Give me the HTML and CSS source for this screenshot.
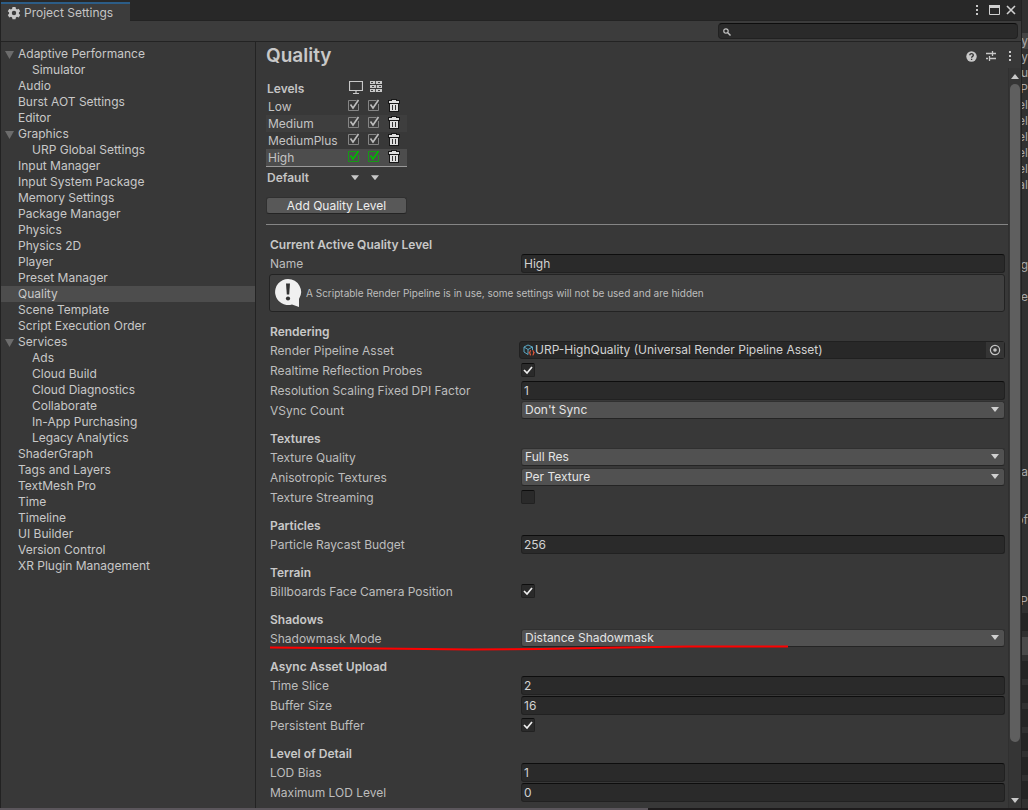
FILE: index.html
```
<!DOCTYPE html>
<html lang="en">
<head>
<meta charset="utf-8">
<title>Project Settings</title>
<link rel="stylesheet" href="styles.css">
</head>
<body>
<svg class="defs" aria-hidden="true">
  <symbol id="trash" viewBox="0 0 12 13"><path d="M3 0h6v1h3v4h-1v8H1V5H0V1h3z" fill="#161616"/><path d="M4 1h4v1h3v2H1V2h3z" fill="#ddd"/><path d="M2 5h8v7H2z" fill="#ddd"/><path d="M4.500 6v5M7.500 6v5" stroke="#333"/></symbol>
  <symbol id="dots" viewBox="0 0 4 12"><path d="M1 1h2v2H1zM1 5h2v2H1zM1 9h2v2H1z" fill="#c8c8c8"/></symbol>
</svg>
<div class="desktop">
<main class="window">
  <header class="tabbar">
    <div class="tab">
      <svg width="14" height="14" viewBox="0 0 14 14"><path fill="#c8c8c8" fill-rule="evenodd" d="M5.500 1h3l.4 1.700 1.100.7 1.700-.6 1.500 2.500-1.300 1.200v1.200l1.300 1.200-1.500 2.500-1.700-.6-1.100.7-.4 1.700h-3l-.4-1.700-1.100-.7-1.700.6L.8 8.900l1.300-1.200V6.500L.8 5.300l1.500-2.500 1.700.6 1.100-.7zM7 4.800a2.200 2.200 0 1 0 0 4.400 2.200 2.200 0 0 0 0-4.400z"/></svg>
      <span>Project Settings</span>
    </div>
    <div class="winbuttons">
      <button aria-label="Menu"><svg width="4" height="12"><use href="#dots"/></svg></button>
      <button aria-label="Maximize"><svg width="11" height="11" viewBox="0 0 11 11"><path d="M.5 .5h10v9H.5z" fill="none" stroke="#d0d0d0"/><path d="M0 0h11v3H0z" fill="#d0d0d0"/></svg></button>
      <button aria-label="Close"><svg width="10" height="10" viewBox="0 0 10 10"><path d="M1 1l8 8M9 1L1 9" stroke="#d0d0d0" stroke-width="1.600"/></svg></button>
    </div>
  </header>
  <div class="toolbar"><input class="search" type="search" aria-label="Search settings"></div>
  <div class="panes">
    <nav class="tree">
      <a class="open" href="#">Adaptive Performance</a>
      <a class="child" href="#">Simulator</a>
      <a href="#">Audio</a>
      <a href="#">Burst AOT Settings</a>
      <a href="#">Editor</a>
      <a class="open" href="#">Graphics</a>
      <a class="child" href="#">URP Global Settings</a>
      <a href="#">Input Manager</a>
      <a href="#">Input System Package</a>
      <a href="#">Memory Settings</a>
      <a href="#">Package Manager</a>
      <a href="#">Physics</a>
      <a href="#">Physics 2D</a>
      <a href="#">Player</a>
      <a href="#">Preset Manager</a>
      <a class="selected" href="#" aria-current="page">Quality</a>
      <a href="#">Scene Template</a>
      <a href="#">Script Execution Order</a>
      <a class="open" href="#">Services</a>
      <a class="child" href="#">Ads</a>
      <a class="child" href="#">Cloud Build</a>
      <a class="child" href="#">Cloud Diagnostics</a>
      <a class="child" href="#">Collaborate</a>
      <a class="child" href="#">In-App Purchasing</a>
      <a class="child" href="#">Legacy Analytics</a>
      <a href="#">ShaderGraph</a>
      <a href="#">Tags and Layers</a>
      <a href="#">TextMesh Pro</a>
      <a href="#">Time</a>
      <a href="#">Timeline</a>
      <a href="#">UI Builder</a>
      <a href="#">Version Control</a>
      <a href="#">XR Plugin Management</a>
    </nav>
    <section class="detail">
      <div class="titlebar">
        <h1>Quality</h1>
        <div class="tools">
          <button aria-label="Help"><svg width="11" height="11" viewBox="0 0 11 11"><circle cx="5.500" cy="5.500" r="5.200" fill="#c8c8c8"/><path d="M3.800 4.300c0-2.300 3.500-2.200 3.500-.1 0 1.200-1.700 1.200-1.700 2.500M5.600 7.700v1.200" fill="none" stroke="#333" stroke-width="1.300"/></svg></button>
          <button aria-label="Presets"><svg width="12" height="12" viewBox="0 0 12 12"><path d="M1 3.500h6M8 3.500h3M7.500 1v5M1 8.500h2M5 8.500h6M4.500 6v5" fill="none" stroke="#c8c8c8" stroke-width="1.300"/></svg></button>
          <button aria-label="More"><svg width="4" height="12"><use href="#dots"/></svg></button>
        </div>
      </div>
      <div class="viewport">
        <div class="content">
          <table class="levels">
            <thead><tr><th>Levels</th>
              <th class="platform"><svg width="14" height="13" viewBox="0 0 14 13"><path d="M.5 .5h13v9H.5zM7 10v2M4 12.500h6" fill="none" stroke="#c8c8c8" stroke-width="1.200"/></svg></th>
              <th class="platform"><svg width="14" height="13" viewBox="0 0 14 13"><path d="M1 0h12v3H1zM1 4h12v3H1zM1 8h12v3H1z" fill="#c8c8c8"/><path d="M2 1.500h2M9 1.500h2M3 5.500h2M10 5.500h2M2 9.500h2M9 9.500h2" stroke="#444"/><path d="M6.500 0v3M7.500 4v3M6.500 8v3" stroke="#555"/></svg></th><th></th></tr></thead>
            <tbody>
              <tr><td>Low</td><td><input type="checkbox" checked aria-label="Low desktop"></td><td><input type="checkbox" checked aria-label="Low server"></td><td><button aria-label="Delete Low"><svg width="12" height="13"><use href="#trash"/></svg></button></td></tr>
              <tr class="alt"><td>Medium</td><td><input type="checkbox" checked aria-label="Medium desktop"></td><td><input type="checkbox" checked aria-label="Medium server"></td><td><button aria-label="Delete Medium"><svg width="12" height="13"><use href="#trash"/></svg></button></td></tr>
              <tr><td>MediumPlus</td><td><input type="checkbox" checked aria-label="MediumPlus desktop"></td><td><input type="checkbox" checked aria-label="MediumPlus server"></td><td><button aria-label="Delete MediumPlus"><svg width="12" height="13"><use href="#trash"/></svg></button></td></tr>
              <tr class="current"><td>High</td><td><input type="checkbox" checked aria-label="High desktop"></td><td><input type="checkbox" checked aria-label="High server"></td><td><button aria-label="Delete High"><svg width="12" height="13"><use href="#trash"/></svg></button></td></tr>
            </tbody>
            <tfoot><tr><th>Default</th><td><button class="drop" aria-label="Desktop default"></button></td><td><button class="drop" aria-label="Server default"></button></td><td></td></tr></tfoot>
          </table>
          <button class="add">Add Quality Level</button>
          <hr>
          <form class="form">
            <section>
              <h2>Current Active Quality Level</h2>
              <div class="row"><label for="name">Name</label><input class="text" id="name" value="High"></div>
              <div class="help">
                <svg width="28" height="30" viewBox="0 0 28 30"><path d="M14 1a13 13 0 1 0 4 25.400l7 2.600v-8A13 13 0 0 0 14 1z" fill="#f0f0f0"/><path d="M12 5.500h4l-.8 11h-2.400z" fill="#333"/><circle cx="14" cy="20.500" r="2.100" fill="#333"/></svg>
                <span>A Scriptable Render Pipeline is in use, some settings will not be used and are hidden</span>
              </div>
            </section>
            <section>
              <h2>Rendering</h2>
              <div class="row"><label for="asset">Render Pipeline Asset</label>
                <div class="object">
                  <svg width="12" height="12" viewBox="0 0 12 12"><path d="M5 1l4.500 2v3M5 1L1 3v5l4 2.500M1 3l4 2.500L9.500 3M5 5.500v5" fill="none" stroke="#5aa7c4" stroke-width="1"/><path d="M8 6.500c-1.500 0-.5 1.800-1.500 2.200 1 .4 0 2.300 1.500 2.300M9.500 6.500c1.500 0 .5 1.800 1.500 2.200-1 .4 0 2.300-1.500 2.300" fill="none" stroke="#e0583a" stroke-width="1.200"/></svg>
                  <input id="asset" value="URP-HighQuality (Universal Render Pipeline Asset)" readonly>
                  <button type="button" aria-label="Pick asset"><svg width="12" height="12" viewBox="0 0 12 12"><circle cx="6" cy="6" r="4.600" fill="none" stroke="#c4c4c4" stroke-width="1.200"/><circle cx="6" cy="6" r="1.800" fill="#c4c4c4"/></svg></button>
                </div></div>
              <div class="row"><label for="probes">Realtime Reflection Probes</label><input class="check" type="checkbox" id="probes" checked></div>
              <div class="row"><label for="dpi">Resolution Scaling Fixed DPI Factor</label><input class="text" id="dpi" value="1"></div>
              <div class="row"><label for="vsync">VSync Count</label><select id="vsync"><option>Don't Sync</option></select></div>
            </section>
            <section>
              <h2>Textures</h2>
              <div class="row"><label for="texq">Texture Quality</label><select id="texq"><option>Full Res</option></select></div>
              <div class="row"><label for="aniso">Anisotropic Textures</label><select id="aniso"><option>Per Texture</option></select></div>
              <div class="row"><label for="stream">Texture Streaming</label><input class="check" type="checkbox" id="stream"></div>
            </section>
            <section>
              <h2>Particles</h2>
              <div class="row"><label for="ray">Particle Raycast Budget</label><input class="text" id="ray" value="256"></div>
            </section>
            <section>
              <h2>Terrain</h2>
              <div class="row"><label for="bill">Billboards Face Camera Position</label><input class="check" type="checkbox" id="bill" checked></div>
            </section>
            <section class="marked">
              <h2>Shadows</h2>
              <div class="row"><label for="mask">Shadowmask Mode</label><select id="mask"><option>Distance Shadowmask</option></select></div>
              <svg class="stroke" width="518" height="6" viewBox="0 0 518 6"><path d="M0 2.500L110 3.500 200 4.500 270 4 350 2.500 420 1.500 518 1.500" fill="none" stroke="#f00" stroke-width="2"/></svg>
            </section>
            <section>
              <h2>Async Asset Upload</h2>
              <div class="row"><label for="slice">Time Slice</label><input class="text" id="slice" value="2"></div>
              <div class="row"><label for="buf">Buffer Size</label><input class="text" id="buf" value="16"></div>
              <div class="row"><label for="persist">Persistent Buffer</label><input class="check" type="checkbox" id="persist" checked></div>
            </section>
            <section>
              <h2>Level of Detail</h2>
              <div class="row"><label for="bias">LOD Bias</label><input class="text" id="bias" value="1"></div>
              <div class="row"><label for="maxlod">Maximum LOD Level</label><input class="text" id="maxlod" value="0"></div>
            </section>
          </form>
        </div>
        <div class="scrollbar">
          <button aria-label="Scroll up"><svg width="8" height="5"><path d="M0 5l4-5 4 5z" fill="#c8c8c8"/></svg></button>
          <div class="track"><div class="thumb"></div></div>
          <button aria-label="Scroll down"><svg width="8" height="5"><path d="M0 0l4 5 4-5z" fill="#c8c8c8"/></svg></button>
        </div>
      </div>
    </section>
  </div>
</main>
<aside class="behind">
  <div class="names top"><span class="lit">ty</span><span>ty</span><span>u</span><span>eP</span><span>el</span><span>el</span><span>el</span><span>el</span><span>el</span><span>al</span></div>
  <div class="names mid"><span>ng</span><span></span><span>ne</span></div>
  <div class="names low"><span>a</span><span></span><span></span><span>of</span></div>
  <div class="names last"><span>RP</span></div>
  <div class="slots"><i></i><i class="button"></i><i></i><i></i><i></i><i></i><i></i><i></i></div>
</aside>
</div>
<div class="bottom"></div>
</body>
</html>
```
FILE: styles.css
```
* { box-sizing: border-box; }
body {
  margin: 0; height: 100vh; overflow: hidden;
  display: flex; flex-direction: column;
  background: #222; color: #c4c4c4;
  font: 12px/16px Inter, "Liberation Sans", sans-serif;
}
button, input, select { font: inherit; color: inherit; margin: 0; }
button { background: none; border: 0; padding: 0; display: flex; align-items: center; justify-content: center; }
svg { display: block; flex: none; }
.defs { position: absolute; width: 0; height: 0; }

.desktop { flex: 1; min-height: 0; display: flex; padding-left: 1px; }
.bottom { flex: none; height: 2px; background: linear-gradient(90deg, #5b565c 0 63%, #1d1b1c 63%); }
.window { flex: 1; min-width: 0; display: flex; flex-direction: column; background: #383838; }

.tabbar { flex: none; height: 21px; display: flex; justify-content: space-between; background: #282828; border-bottom: 1px solid #232323; }
.tab {
  display: flex; align-items: center; gap: 3px; height: 19px; margin-top: 2px; padding: 0 17px 0 6px;
  background: #3c3c3c; border-top: 2px solid #2c5d87;
}
.winbuttons { display: flex; align-items: center; gap: 6px; padding-right: 5px; }
.winbuttons button:first-child { margin-right: 4px; }
.toolbar { flex: none; height: 21px; padding: 2px 3px 0 0; display: flex; justify-content: flex-end; align-items: flex-start; background: #3c3c3c; border-bottom: 1px solid #232323; }
.search {
  appearance: none; width: 300px; height: 16px; padding: 0 8px 0 20px;
  background: #2a2a2a url("data:image/svg+xml,%3Csvg xmlns='http://www.w3.org/2000/svg' width='8' height='8'%3E%3Ccircle cx='3' cy='3' r='2.200' fill='none' stroke='%23c4c4c4' stroke-width='1.200'/%3E%3Cpath d='M4.500 4.500L7.500 7.500' stroke='%23c4c4c4' stroke-width='1.400'/%3E%3C/svg%3E") no-repeat 4px 4px;
  border: 1px solid #212121; border-top-color: #0d0d0d; border-radius: 4px;
}

.panes { flex: 1; min-height: 0; display: flex; }
.tree { flex: none; width: 255px; padding-top: 4px; border-right: 1px solid #232323; }
.tree a { display: block; height: 16px; padding-left: 17px; color: #c8c8c8; text-decoration: none; }
.tree .child { padding-left: 31px; }
.tree .selected { background: #4d4d4d; }
.tree .open { display: flex; align-items: center; gap: 4px; padding-left: 4px; }
.tree .open::before { content: ""; width: 9px; height: 8px; margin-top: 2px; background: #6c6c6c; clip-path: polygon(0 0, 100% 0, 50% 100%); }

.detail { flex: 1; min-width: 0; display: flex; flex-direction: column; }
.titlebar { flex: none; height: 26px; padding: 2px 9px 0 10px; display: flex; justify-content: space-between; align-items: center; }
h1 { margin: 0; font-size: 19px; line-height: 24px; font-weight: 600; color: #c8c8c8; }
.tools { display: flex; align-items: center; gap: 8px; }
.tools button:last-child { margin-left: 3px; }
.viewport { flex: 1; min-height: 0; display: flex; }
.content { flex: 1; min-width: 0; overflow: hidden; padding: 12px 0 0 10px; }

.levels { width: 141px; table-layout: fixed; border-collapse: collapse; line-height: 17px; }
.levels th, .levels td { height: 17px; padding: 0; vertical-align: top; }
.levels th { font-weight: 600; text-align: left; padding-left: 1px; }
.levels th:first-child { width: 82px; }
.levels th.platform { width: 20px; }
.levels thead th { height: 18px; }
.levels thead svg { margin-top: 1px; }
.levels td:first-child { padding-left: 2px; }
.levels .alt { background: #3e3e3e; }
.levels .current { background: #4d4d4d; border-bottom: 1px solid #999; }
.levels tfoot th, .levels tfoot td { height: 22px; vertical-align: middle; }
.levels input {
  appearance: none; display: block; width: 12px; height: 12px; margin-top: 1px;
  background: url("data:image/svg+xml,%3Csvg xmlns='http://www.w3.org/2000/svg' width='12' height='12'%3E%3Cpath d='M8.500 1.500h-8v10h10V5' fill='none' stroke='%23858585'/%3E%3Cpath d='M2.500 5.500L5 9l5.500-8' fill='none' stroke='%23bdbdbd' stroke-width='1.600'/%3E%3C/svg%3E");
}
.levels tbody button { margin-top: 1px; }
.levels .current input { background-image: url("data:image/svg+xml,%3Csvg xmlns='http://www.w3.org/2000/svg' width='12' height='12'%3E%3Cpath d='M8.500 1.500h-8v10h10V5' fill='none' stroke='%23159a15'/%3E%3Cpath d='M2.500 5.500L5 9l5.500-8' fill='none' stroke='%2300b800' stroke-width='1.700'/%3E%3C/svg%3E"); }
.drop { width: 8px; height: 5px; margin-left: 3px; background: #c8c8c8; clip-path: polygon(0 0, 100% 0, 50% 100%); }
.add { width: 141px; height: 17px; margin-top: 8px; background: #585858; border: 1px solid #303030; border-bottom-color: #242424; border-radius: 3px; color: #eee; line-height: 15px; }
hr { margin: 10px 0 11px; border: 0; height: 1px; background: #858585; }

.form { padding: 0 3px 0 4px; }
.form section { margin-bottom: 9px; }
h2 { margin: 0; font-size: 12px; line-height: 18px; font-weight: 600; color: #c8c8c8; }
.row { display: flex; height: 20px; }
.row label { flex: none; width: 251px; line-height: 20px; white-space: nowrap; color: #bdbdbd; }
.text { flex: 1; min-width: 0; height: 19px; padding: 1px 2px 0; background: #2a2a2a; border: 1px solid #212121; border-top-color: #0d0d0d; border-radius: 3px; color: #d2d2d2; }
select {
  appearance: none; flex: 1; min-width: 0; height: 18px; padding: 0 20px 0 3px; line-height: 16px; color: #e4e4e4;
  background: #515151 url("data:image/svg+xml,%3Csvg xmlns='http://www.w3.org/2000/svg' width='8' height='5'%3E%3Cpath d='M0 0h8L4 5z' fill='%23d0d0d0'/%3E%3C/svg%3E") no-repeat right 5px center;
  border: 1px solid #303030; border-bottom-color: #242424; border-radius: 3px;
}
.check { appearance: none; width: 14px; height: 14px; margin-top: 2px; background: #2a2a2a; border: 1px solid #212121; border-top-color: #0d0d0d; border-radius: 2px; }
.check:checked { background: #2a2a2a url("data:image/svg+xml,%3Csvg xmlns='http://www.w3.org/2000/svg' width='12' height='12'%3E%3Cpath d='M2 6l3 3 5-6' fill='none' stroke='%23eee' stroke-width='1.700'/%3E%3C/svg%3E") center; }
.object { flex: 1; min-width: 0; height: 18px; margin-left: -2px; display: flex; align-items: center; padding-left: 3px; background: #282828; border: 1px solid #202020; border-radius: 3px; }
.object input { flex: 1; min-width: 0; height: 16px; padding: 1px 0 0; background: none; border: 0; color: #d2d2d2; }
.object button { width: 18px; height: 16px; background: #353535; }
.help { display: flex; align-items: center; gap: 4px; height: 38px; margin: 0 0 11px -1px; padding-left: 4px; background: #404040; border: 1px solid #232323; border-radius: 3px; font-size: 10px; color: #bdbdbd; }
.marked { position: relative; }
.stroke { position: absolute; left: 0; bottom: -2px; }

.scrollbar { flex: none; width: 13px; display: flex; flex-direction: column; background: #353535; border-left: 1px solid #303030; }
.scrollbar button { height: 16px; width: 100%; }
.track { flex: 1; padding: 0 1px; }
.thumb { height: 93%; background: #5f5f5f; border-radius: 5px; }

.behind { flex: none; width: 7px; overflow: hidden; background: #303030; border-left: 1px solid #222; color: #aaa; padding-top: 33px; }
.names span { display: flex; justify-content: flex-end; height: 16px; white-space: nowrap; }
.names .lit { background: #444; }
.mid { margin-top: 64px; }
.low { margin-top: 159px; }
.last { margin-top: 65px; }
.slots { display: flex; flex-direction: column; gap: 6px; margin-top: 4px; }
.slots i { height: 18px; background: #242424; }
.slots .button { background: #4a4a4a; }
```
